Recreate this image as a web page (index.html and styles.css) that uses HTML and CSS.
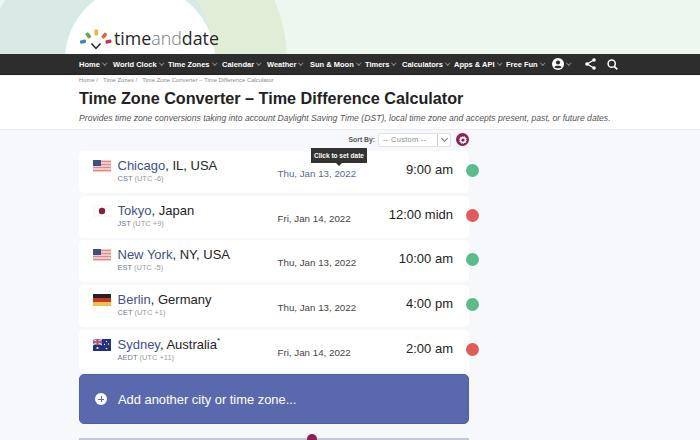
FILE: index.html
```html
<!DOCTYPE html>
<html lang="en">
<head>
<meta charset="utf-8">
<title>Time Zone Converter – Time Difference Calculator</title>
<link rel="stylesheet" href="styles.css">
</head>
<body>
<header class="hero">
  <svg class="hero-art" width="700" height="54" viewBox="0 0 700 54" aria-hidden="true">
    <rect width="700" height="54" fill="#edf7f0"/>
    <circle cx="140" cy="60" r="147" fill="#e0eed8"/>
    <circle cx="101" cy="60" r="113" fill="#d9e9e5"/>
    <circle cx="140" cy="60" r="75" fill="#ffffff"/>
  </svg>
  <div class="logo">
    <svg class="logo-mark" width="34" height="22" viewBox="0 0 34 22" aria-hidden="true">
      <rect x="0" y="11" width="6" height="3.4" rx="1" fill="#3f86b8" transform="rotate(-12 3 12.7)"/>
      <rect x="6.500" y="3.500" width="3.600" height="6" rx="1" fill="#67a24a" transform="rotate(-38 8 6.500)"/>
      <rect x="14.500" y="0.500" width="3.600" height="6" rx="1" fill="#eeb93b"/>
      <rect x="22.500" y="3.500" width="3.600" height="6" rx="1" fill="#d9683a" transform="rotate(38 24 6.500)"/>
      <rect x="25.500" y="11" width="6" height="3.400" rx="1" fill="#c2305f" transform="rotate(-12 28 12.700)"/>
      <path d="M11.500 14.500 L16 19.500 L20.500 14.500" fill="none" stroke="#222" stroke-width="1.500"/>
    </svg>
    <span class="logo-text">time<span class="logo-and">and</span>date</span>
  </div>
</header>
<nav class="nav">
  <span class="nav-item nav-home">Home<i class="chev"></i></span>
  <span class="nav-item nav-world">World Clock<i class="chev"></i></span>
  <span class="nav-item nav-zones">Time Zones<i class="chev"></i></span>
  <span class="nav-item nav-cal">Calendar<i class="chev"></i></span>
  <span class="nav-item nav-weather">Weather<i class="chev"></i></span>
  <span class="nav-item nav-sun">Sun &amp; Moon<i class="chev"></i></span>
  <span class="nav-item nav-timers">Timers<i class="chev"></i></span>
  <span class="nav-item nav-calc">Calculators<i class="chev"></i></span>
  <span class="nav-item nav-apps">Apps &amp; API<i class="chev"></i></span>
  <span class="nav-item nav-fun">Free Fun<i class="chev"></i></span>
  <span class="nav-item nav-user">
    <svg width="12" height="12" viewBox="0 0 12 12" aria-hidden="true"><circle cx="6" cy="6" r="6" fill="#fff"/><circle cx="6" cy="4.500" r="2.100" fill="#2d2d2d"/><path d="M2.400 9.200 C3.200 7.300 8.800 7.300 9.600 9.200 C8.500 10.500 3.500 10.500 2.400 9.200Z" fill="#2d2d2d"/></svg>
    <i class="chev"></i>
  </span>
  <svg class="nav-share" width="11" height="12" viewBox="0 0 11 12" aria-hidden="true"><path d="M9 2 L2 6 L9 10" fill="none" stroke="#fff" stroke-width="1.300"/><circle cx="9" cy="2" r="1.800" fill="#fff"/><circle cx="2" cy="6" r="1.800" fill="#fff"/><circle cx="9" cy="10" r="1.800" fill="#fff"/></svg>
  <svg class="nav-search" width="11" height="11" viewBox="0 0 11 11" aria-hidden="true"><circle cx="4.700" cy="4.700" r="3.600" fill="none" stroke="#fff" stroke-width="1.500"/><path d="M7.300 7.300 L10.300 10.300" stroke="#fff" stroke-width="1.700"/></svg>
</nav>
<section class="intro">
  <div class="crumbs"><span>Home /</span><span>Time Zones /</span><span>Time Zone Converter – Time Difference Calculator</span></div>
  <h1 class="title">Time Zone Converter – Time Difference Calculator</h1>
  <p class="lede">Provides time zone conversions taking into account Daylight Saving Time (DST), local time zone and accepts present, past, or future dates.</p>
</section>
<main class="main">
  <div class="sort">
    <span class="sort-label">Sort By:</span>
    <span class="select"><span class="select-value">-- Custom --</span><span class="select-btn"><i class="select-chev"></i></span></span>
    <span class="gear"><svg width="8" height="8" viewBox="0 0 8 8" aria-hidden="true"><circle cx="4" cy="4" r="2.400" fill="none" stroke="#fff" stroke-width="1.600"/><circle cx="4" cy="4" r="3.700" fill="none" stroke="#fff" stroke-width="0.900" stroke-dasharray="1.200 1.100"/></svg></span>
  </div>
  <div class="rows">
    <article class="row">
      <svg class="flag" width="18" height="12" viewBox="0 0 18 12" aria-hidden="true"><rect width="18" height="12" fill="#f3c9c6"/><path d="M0 1.500H18M0 4.500H18M0 7.500H18M0 10.500H18" stroke="#d98a8c" stroke-width="1.100"/><rect width="8" height="6" fill="#3c4f86"/></svg>
      <div class="place"><div class="city"><span class="link">Chicago</span>, IL, USA</div><div class="zone">CST <span class="utc">(UTC -6)</span></div></div>
      <div class="date date-link">Thu, Jan 13, 2022</div>
      <div class="time">9:00 am</div>
      <span class="dot dot-green"></span>
      <div class="tip">Click to set date</div>
    </article>
    <article class="row">
      <svg class="flag" width="18" height="12" viewBox="0 0 18 12" aria-hidden="true"><rect width="18" height="12" fill="#fbfbfb" stroke="#f0f0f0" stroke-width="0.500"/><circle cx="9" cy="6" r="3.200" fill="#8a1f38"/></svg>
      <div class="place"><div class="city"><span class="link">Tokyo</span>, Japan</div><div class="zone">JST <span class="utc">(UTC +9)</span></div></div>
      <div class="date">Fri, Jan 14, 2022</div>
      <div class="time">12:00 midn</div>
      <span class="dot dot-red"></span>
    </article>
    <article class="row">
      <svg class="flag" width="18" height="12" viewBox="0 0 18 12" aria-hidden="true"><rect width="18" height="12" fill="#f3c9c6"/><path d="M0 1.500H18M0 4.500H18M0 7.500H18M0 10.500H18" stroke="#d98a8c" stroke-width="1.100"/><rect width="8" height="6" fill="#3c4f86"/></svg>
      <div class="place"><div class="city"><span class="link">New York</span>, NY, USA</div><div class="zone">EST <span class="utc">(UTC -5)</span></div></div>
      <div class="date">Thu, Jan 13, 2022</div>
      <div class="time">10:00 am</div>
      <span class="dot dot-green"></span>
    </article>
    <article class="row">
      <svg class="flag" width="18" height="12" viewBox="0 0 18 12" aria-hidden="true"><rect width="18" height="4" fill="#222"/><rect y="4" width="18" height="4" fill="#c8352b"/><rect y="8" width="18" height="4" fill="#efc14a"/></svg>
      <div class="place"><div class="city"><span class="link">Berlin</span>, Germany</div><div class="zone">CET <span class="utc">(UTC +1)</span></div></div>
      <div class="date">Thu, Jan 13, 2022</div>
      <div class="time">4:00 pm</div>
      <span class="dot dot-green"></span>
    </article>
    <article class="row">
      <svg class="flag" width="18" height="12" viewBox="0 0 18 12" aria-hidden="true"><rect width="18" height="12" fill="#22307f"/><rect width="9" height="6" fill="#8d86a8"/><path d="M0 0L9 6M9 0L0 6" stroke="#e8e4ea" stroke-width="1"/><path d="M4.500 0V6M0 3H9" stroke="#c9415a" stroke-width="1.400"/><circle cx="4.500" cy="9" r="1.100" fill="#fff"/><circle cx="13.500" cy="2.500" r="0.700" fill="#fff"/><circle cx="11.500" cy="5.500" r="0.700" fill="#fff"/><circle cx="15.500" cy="5" r="0.700" fill="#fff"/><circle cx="13.500" cy="9.500" r="0.800" fill="#fff"/></svg>
      <div class="place"><div class="city"><span class="link">Sydney</span>, Australia<sup class="mark">*</sup></div><div class="zone">AEDT <span class="utc">(UTC +11)</span></div></div>
      <div class="date">Fri, Jan 14, 2022</div>
      <div class="time">2:00 am</div>
      <span class="dot dot-red"></span>
    </article>
  </div>
  <button class="add" type="button"><span class="add-icon"></span><span>Add another city or time zone...</span></button>
  <div class="slider"><span class="handle"></span></div>
</main>
</body>
</html>
```
FILE: styles.css
```css
* { box-sizing: border-box; }
html, body { margin: 0; height: 440px; overflow: hidden; }
body { font-family: "Liberation Sans", Arial, sans-serif; background: #f6f8fc; color: #222; }

.hero { position: relative; height: 54px; overflow: hidden; display: flex; align-items: flex-end; padding: 0 0 2px 80px; }
.hero-art { position: absolute; left: 0; top: 0; }
.logo { position: relative; display: flex; align-items: center; height: 28px; }
.logo-mark { display: block; margin-top: 3px; }
.logo-text { font-family: "Open Sans", sans-serif; font-size: 17.800px; color: #262626; line-height: 28px; }
.logo-and { color: #77777a; font-weight: 300; }

.nav { height: 21px; background: #2d2d2d; border-bottom: 1px solid #1d1d1d; display: flex; align-items: center; padding-left: 79px; color: #fff; font-size: 7.500px; font-weight: 700; }
.nav-item { display: flex; align-items: center; flex: none; white-space: nowrap; }
.nav-home { width: 34px; }
.nav-world { width: 55px; }
.nav-zones { width: 54px; }
.nav-cal { width: 45px; }
.nav-weather { width: 43px; }
.nav-sun { width: 55px; }
.nav-timers { width: 37px; }
.nav-calc { width: 52px; }
.nav-apps { width: 52px; }
.nav-fun { width: 46px; }
.nav-user { width: 33px; }
.nav-share { margin-right: 11px; flex: none; }
.nav-search { flex: none; }
.chev { display: block; width: 3.500px; height: 3.500px; margin: -2px 0 0 3px; border-right: 1px solid #8a8a8a; border-bottom: 1px solid #8a8a8a; transform: rotate(45deg); }

.intro { height: 55px; background: #fff; border-bottom: 1px solid #e9ecf1; padding: 1px 0 0 79px; }
.crumbs { display: flex; gap: 5px; font-size: 5.900px; line-height: 9px; color: #8c8c8c; }
.title { margin: 3px 0 0; font-size: 16.200px; line-height: 21px; font-weight: 700; color: #222; white-space: nowrap; }
.lede { margin: 3px 0 0; font-size: 8.630px; line-height: 12px; font-style: italic; color: #555; white-space: nowrap; }

.main { padding: 2px 0 0 79px; width: 469px; box-sizing: content-box; }
.sort { width: 390px; height: 15px; display: flex; align-items: center; justify-content: flex-end; }
.sort-label { font-size: 6.800px; font-weight: 700; color: #555; margin-right: 3px; }
.select { width: 73px; height: 14px; display: flex; background: #fff; border: 1px solid #dfe2e8; border-radius: 2px; margin-right: 5px; }
.select-value { flex: 1; font-size: 7.500px; line-height: 12px; padding-left: 4px; color: #8b8b8b; letter-spacing: 0.300px; }
.select-btn { width: 13px; border-left: 1px solid #c9ccd2; display: flex; justify-content: center; }
.select-chev { display: block; width: 5px; height: 5px; margin-top: 2.500px; border-right: 1px solid #777; border-bottom: 1px solid #777; transform: rotate(45deg); }
.gear { width: 13px; height: 13px; border-radius: 50%; background: #8f1d56; display: flex; align-items: center; justify-content: center; }

.rows { margin-top: 4px; width: 390px; display: flex; flex-direction: column; gap: 2.700px; }
.row { position: relative; height: 42px; background: #fff; border-radius: 5px; display: flex; align-items: flex-start; padding-left: 13.500px; }
.flag { flex: none; margin-top: 9px; margin-right: 7px; }
.place { width: 160px; flex: none; padding-top: 7px; }
.city { font-size: 13px; line-height: 16px; color: #222; white-space: nowrap; }
.link { color: #3f4f8c; }
.mark { font-size: 8px; line-height: 0; vertical-align: 6px; }
.zone { font-size: 7.500px; line-height: 9px; color: #6e7ba0; white-space: nowrap; }
.utc { color: #9a9a9a; }
.date { width: 78px; flex: none; margin-top: 17px; font-size: 9.750px; line-height: 12px; color: #444; white-space: nowrap; }
.date-link { color: #56689a; }
.time { flex: 1; margin-top: 10px; font-size: 13px; line-height: 18px; text-align: right; color: #222; white-space: nowrap; }
.dot { flex: none; width: 13px; height: 13px; margin: 13px -9.500px 0 12.500px; border-radius: 50%; }
.dot-green { background: #5cbb8a; }
.dot-red { background: #e25b5b; }
.tip { position: absolute; left: 232px; top: -3px; width: 56px; height: 15px; background: #333; color: #fff; font-size: 6.500px; font-weight: 700; line-height: 15px; text-align: center; white-space: nowrap; }
.tip::after { content: ""; position: absolute; left: 25px; top: 15px; border: 3px solid transparent; border-top-color: #333; border-bottom: 0; }

.add { display: flex; align-items: center; width: 390px; height: 50px; margin-top: 2.500px; padding: 0 0 0 15px; border: 1px solid #4f609f; border-radius: 5px; background: #5a69ad; color: #fff; font-family: inherit; font-size: 12.900px; gap: 11px; text-align: left; }
.add-icon { position: relative; width: 12px; height: 12px; border-radius: 50%; background: #fff; flex: none; }
.add-icon::before, .add-icon::after { content: ""; position: absolute; background: #5a69ad; }
.add-icon::before { left: 3px; top: 5.500px; width: 6px; height: 1px; }
.add-icon::after { left: 5.500px; top: 3px; width: 1px; height: 6px; }

.slider { position: relative; width: 390px; height: 10px; margin-top: 14px; background: #c3c9d6; }
.handle { position: absolute; left: 228px; top: -4px; width: 10px; height: 10px; border-radius: 50%; background: #8f1d56; }
```
